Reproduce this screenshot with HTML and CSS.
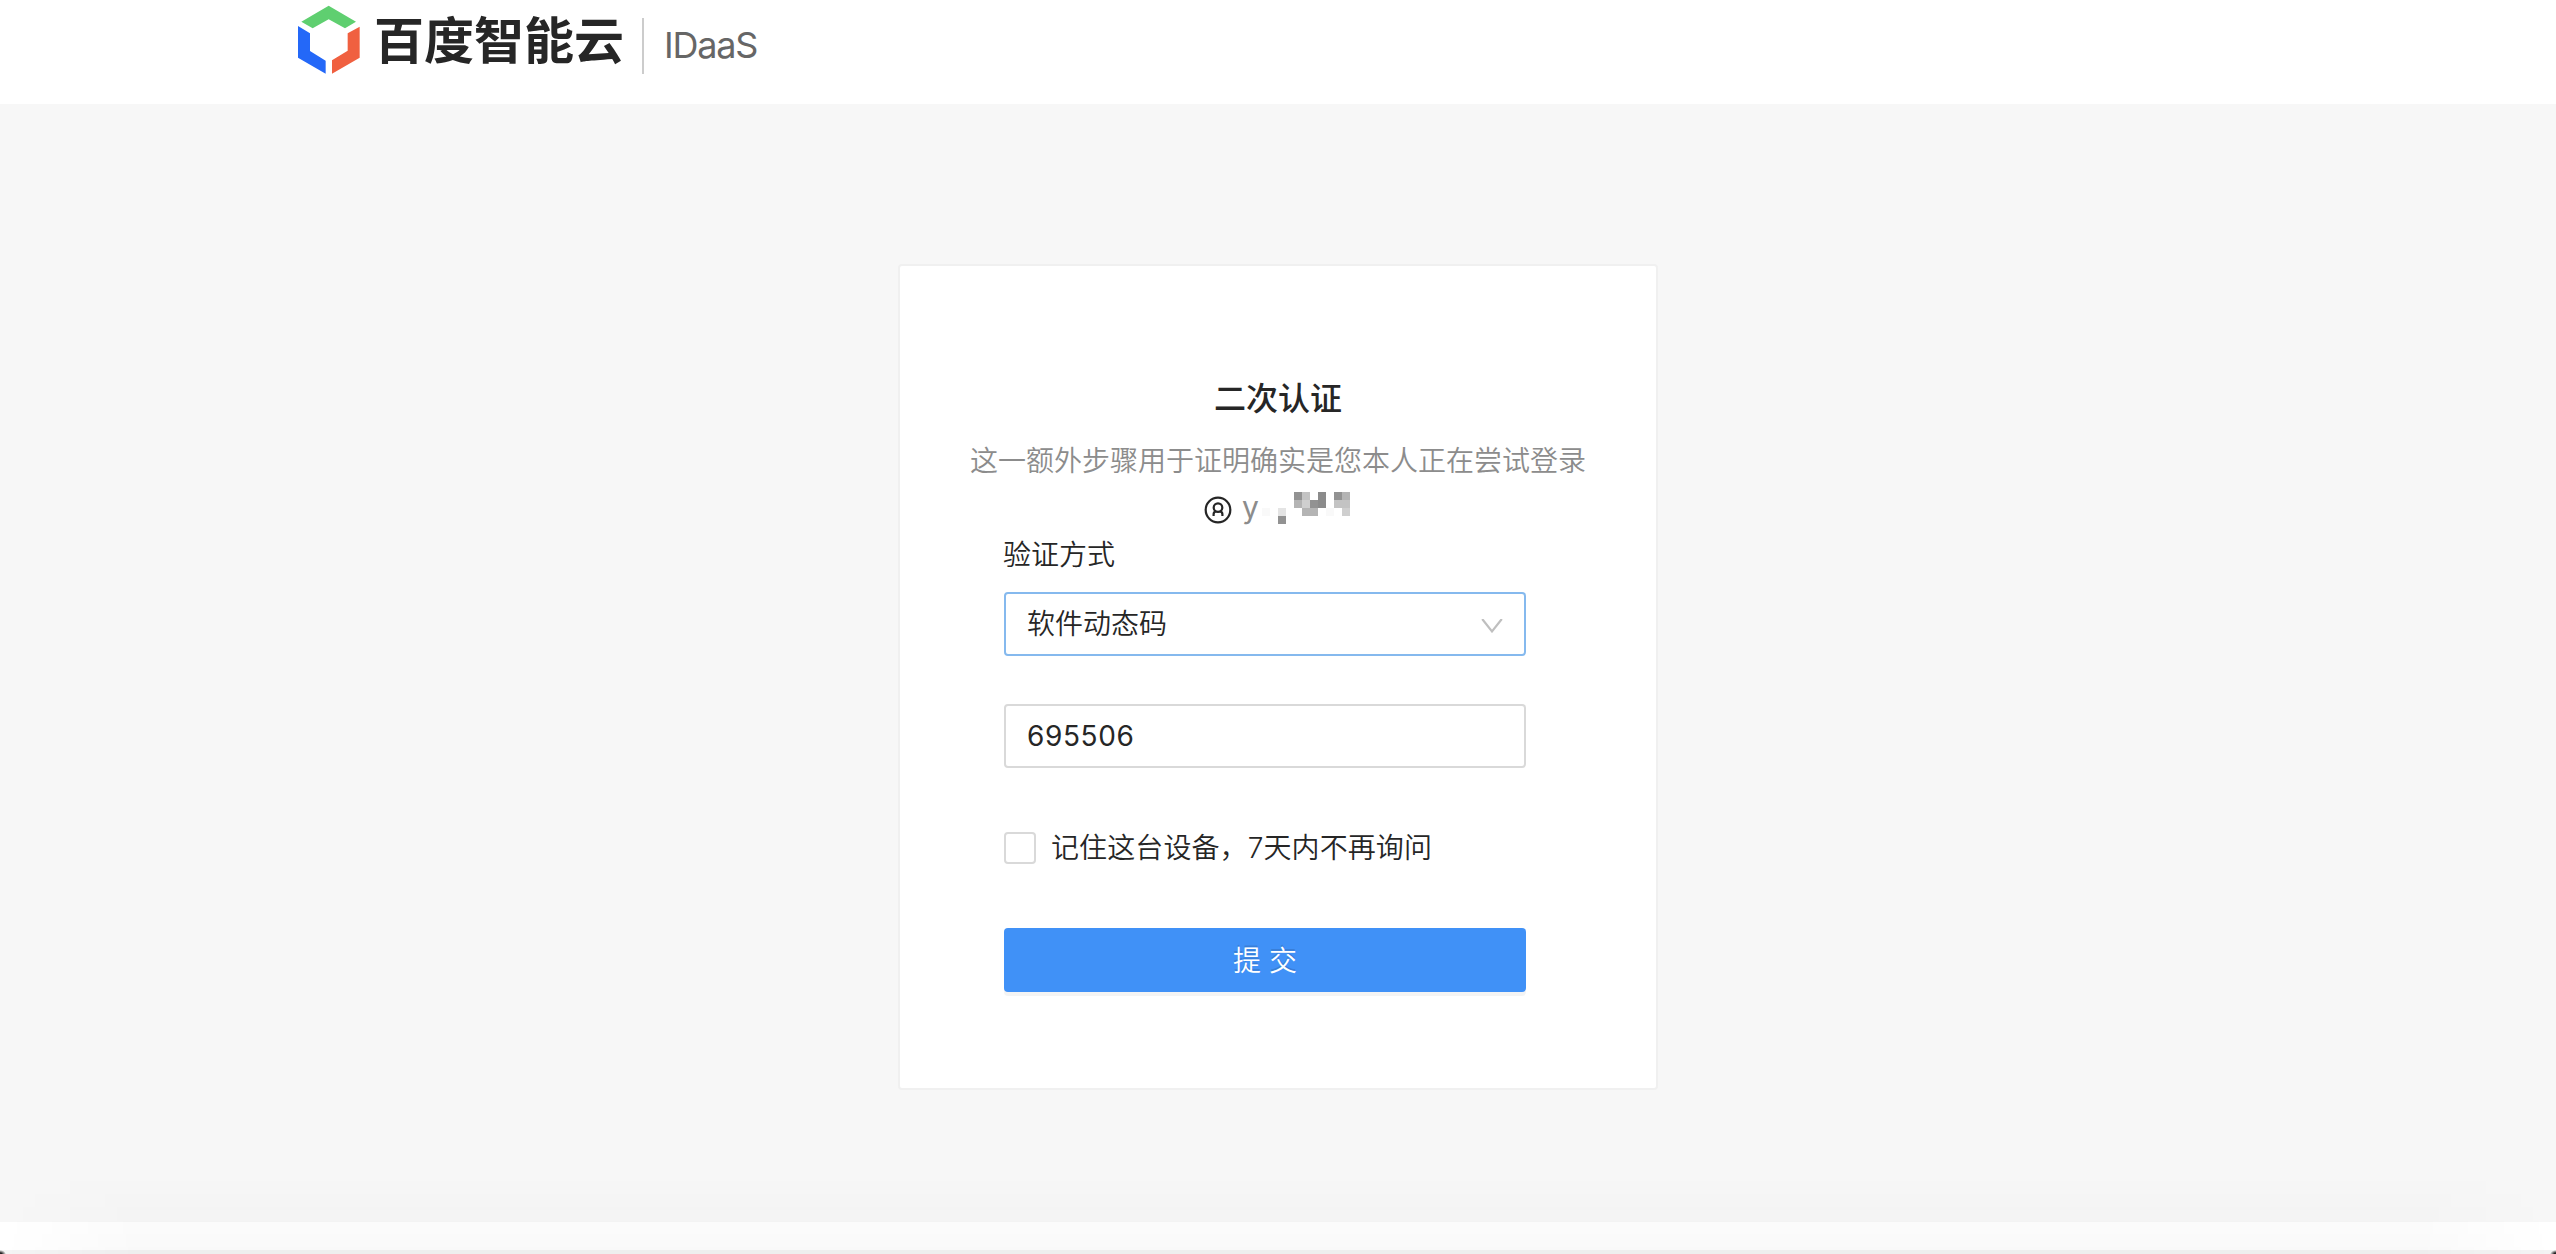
FILE: index.html
```html
<!DOCTYPE html>
<html lang="zh-CN">
<head>
    <meta charset="UTF-8">
    <meta name="viewport" content="width=device-width, initial-scale=1.0">
    <title>IDaaS 二次认证</title>
    <link rel="stylesheet" href="styles.css">
</head>
<body>
    <header class="header">
        <svg class="logo" viewBox="54 0 186 225">
            <path fill="#5fcf70" d="M146 17L228 65L195 85L146 58L98 85L64 65Z"/>
            <path fill="#2468f8" d="M54 78L90 100V153L137 182V221L54 173Z"/>
            <path fill="#f06040" d="M239 80V173L156 221V181L203 152V100Z"/>
        </svg>
        <span class="brand">百度智能云</span>
        <span class="product">IDaaS</span>
    </header>

    <main class="content">
        <div class="card">
            <h1>二次认证</h1>
            <p class="desc">这一额外步骤用于证明确实是您本人正在尝试登录</p>
            <div class="user">
                <svg class="avatar" viewBox="0 0 28 28">
                    <circle cx="14" cy="14" r="12.3"/>
                    <circle cx="14" cy="11.6" r="4.3"/>
                    <path d="M9.6 20V18.2Q9.8 15.8 11.8 15.4M18.4 20V18.2Q18.2 15.8 16.2 15.4"/>
                </svg>
                <span class="name">y</span>
                <!-- masked part of the user name -->
                <svg class="mask" viewBox="0 0 11 4" shape-rendering="crispEdges">
                    <path fill="#929292" d="M4 0h1v1h-1zM9 0h1v1h-1zM6 1h1v1h-1zM2 3h1v1h-1z"/>
                    <path fill="#8b8b8b" d="M7 0h1v2h-1z"/>
                    <path fill="#b4b4b4" d="M10 0h1v1h-1zM4 1h1v1h-1zM5 2h2v1h-2z"/>
                    <path fill="#c3c3c3" d="M5 0h1v1h-1zM9 1h2v1h-2z"/>
                    <path fill="#cfcfcf" d="M5 1h1v1h-1zM10 2h1v1h-1z"/>
                    <path fill="#e4e4e4" d="M2 2h1v1h-1z"/>
                    <path fill="#f9f9f9" d="M0 2h1v1h-1zM8 2h1v1h-1z"/>
                </svg>
            </div>

            <form class="form">
                <label class="label">验证方式</label>
                <div class="select">
                    <span>软件动态码</span>
                    <svg class="arrow" viewBox="0 0 22 14">
                        <path d="M1.2 0L11 12.4L20.8 0"/>
                    </svg>
                </div>
                <input class="code" type="text" value="695506">
                <label class="remember">
                    <input class="check" type="checkbox">
                    <span>记住这台设备，7天内不再询问</span>
                </label>
                <button class="submit" type="button">提 交</button>
            </form>
        </div>
    </main>

    <footer class="footer"></footer>
    <div class="shade"></div>
</body>
</html>
```

FILE: styles.css
```css
*{
    margin: 0;
    padding: 0;
    box-sizing: border-box;
    font-family: Inter, "Noto Sans CJK SC", sans-serif;
}
body{
    background-color: #fff;
    color: #262626;
    font-size: 28px;
    font-weight: 350;
    height: 1254px;
    overflow: hidden;
}
.header{
    display: flex;
    align-items: flex-start;
    height: 104px;
    padding-left: 298px;
}
.logo{
    width: 62px;
    height: 75px;
}
.brand{
    margin-left: 14px;
    font-size: 50px;
    font-weight: 700;
    line-height: 82px;
}
.product{
    height: 56px;
    margin-top: 18px;
    margin-left: 18px;
    padding-left: 20px;
    border-left: 2px solid #ccc;
    color: #666;
    font-size: 36px;
    font-weight: 400;
    letter-spacing: -1.2px;
    line-height: 55px;
}
.content{
    height: 1118px;
    padding-top: 160px;
    background-color: #f7f7f7;
}
.card{
    width: 760px;
    height: 826px;
    margin: auto;
    padding-top: 109px;
    background-color: #fff;
    border: 2px solid #f0f0f0;
    border-radius: 4px;
    text-align: center;
}
h1{
    font-size: 32px;
    font-weight: 500;
    line-height: 48px;
}
.desc{
    margin-top: 16px;
    color: #8c8c8c;
    line-height: 44px;
}
.user{
    display: flex;
    height: 48px;
    margin-top: 1px;
    padding-left: 304px;
}
.avatar{
    width: 28px;
    height: 28px;
    margin-top: 12px;
    fill: none;
    stroke: #262626;
    stroke-width: 2.2;
}
.name{
    width: 30px;
    padding-left: 10px;
    color: #8c8c8c;
    font-size: 30px;
    font-weight: 400;
    line-height: 46px;
    text-align: left;
}
.mask{
    width: 88px;
    height: 32px;
    margin-top: 8px;
}
.form{
    width: 522px;
    margin-left: 104px;
    text-align: left;
}
.label{
    display: block;
    height: 60px;
    line-height: 46px;
    text-indent: -1px;
}
.select{
    display: flex;
    align-items: center;
    justify-content: space-between;
    height: 64px;
    padding: 0 21px;
    border: 2px solid #85b9ee;
    border-radius: 4px;
    line-height: 60px;
}
.select span{
    height: 60px;
}
.arrow{
    width: 22px;
    height: 14px;
    margin-top: 3px;
    fill: none;
    stroke: #bfbfbf;
    stroke-width: 2.2;
}
.code{
    display: block;
    width: 100%;
    height: 64px;
    margin-top: 48px;
    padding: 0 21px;
    border: 2px solid #d9d9d9;
    border-radius: 4px;
    color: #262626;
    font-size: 28px;
    letter-spacing: 0.6px;
}
.remember{
    display: flex;
    align-items: center;
    height: 32px;
    margin-top: 64px;
}
.remember span{
    height: 32px;
    line-height: 33px;
    letter-spacing: 0.1px;
}
.check{
    appearance: none;
    width: 32px;
    height: 32px;
    margin-right: 15px;
    border: 2px solid #d9d9d9;
    border-radius: 4px;
}
.submit{
    display: block;
    width: 100%;
    height: 64px;
    margin-top: 64px;
    padding-bottom: 2px;
    border: none;
    border-radius: 4px;
    background-color: #4091f7;
    box-shadow: 0 4px 0 rgba(0,0,0,0.045);
    color: #fff;
    font-size: 28px;
    font-weight: 350;
    text-shadow: 0 -2px 0 rgba(0,0,0,0.12);
}
.footer{
    height: 32px;
    border-bottom: 4px solid #f4f4f4;
}
/* soft darkening along the window's lower edge */
.shade{
    position: absolute;
    left: 0;
    right: 0;
    bottom: 0;
    height: 80px;
    background: linear-gradient(transparent, rgba(0,0,0,0.022));
    mask-image: linear-gradient(to right, transparent, #000 140px, #000 2416px, transparent);
}
/* dark rounded corners of the window */
body::before, body::after{
    content: "";
    position: absolute;
    bottom: 0;
    width: 6px;
    height: 4px;
}
body::before{
    left: 0;
    background: radial-gradient(ellipse at bottom left, #222 20%, transparent 70%);
}
body::after{
    right: 0;
    background: radial-gradient(ellipse at bottom right, #222 20%, transparent 70%);
}
```
